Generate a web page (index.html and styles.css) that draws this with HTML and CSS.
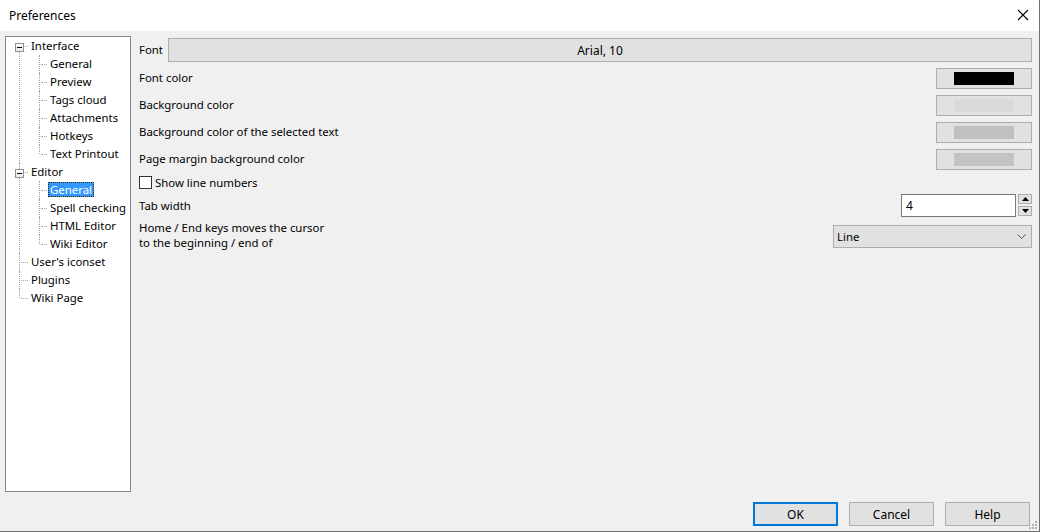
FILE: index.html
```html
<!DOCTYPE html>
<html lang="en">
  <head>
    <meta charset="UTF-8">
    <title>Preferences</title>
    <link rel="stylesheet" href="styles.css">
  </head>
  <body>
    <div class="window">
      <div class="titlebar">
        <span class="title">Preferences</span>
        <svg class="close" width="12" height="12" viewBox="0 0 12 12">
          <path d="M1 1 L11 11 M11 1 L1 11" stroke="#000" stroke-width="1.1" fill="none"/>
        </svg>
      </div>

      <div class="main">
        <div class="tree">
          <ul class="root">
            <li>
              <div class="row"><span class="toggle"></span><span class="label">Interface</span></div>
              <ul class="sub">
                <li><div class="row"><span class="label">General</span></div></li>
                <li><div class="row"><span class="label">Preview</span></div></li>
                <li><div class="row"><span class="label">Tags cloud</span></div></li>
                <li><div class="row"><span class="label">Attachments</span></div></li>
                <li><div class="row"><span class="label">Hotkeys</span></div></li>
                <li><div class="row"><span class="label">Text Printout</span></div></li>
              </ul>
            </li>
            <li>
              <div class="row"><span class="toggle"></span><span class="label">Editor</span></div>
              <ul class="sub">
                <li><div class="row"><span class="label selected">General</span></div></li>
                <li><div class="row"><span class="label">Spell checking</span></div></li>
                <li><div class="row"><span class="label">HTML Editor</span></div></li>
                <li><div class="row"><span class="label">Wiki Editor</span></div></li>
              </ul>
            </li>
            <li><div class="row"><span class="label">User's iconset</span></div></li>
            <li><div class="row"><span class="label">Plugins</span></div></li>
            <li><div class="row"><span class="label">Wiki Page</span></div></li>
          </ul>
        </div>

        <div class="panel">
          <div class="font-row">
            <span class="font-label">Font</span>
            <div class="btn font-btn">Arial, 10</div>
          </div>
          <div class="color-row">
            <span>Font color</span>
            <div class="btn color-btn"><span class="swatch sw-black"></span></div>
          </div>
          <div class="color-row">
            <span>Background color</span>
            <div class="btn color-btn"><span class="swatch sw-light"></span></div>
          </div>
          <div class="color-row">
            <span>Background color of the selected text</span>
            <div class="btn color-btn"><span class="swatch sw-mid"></span></div>
          </div>
          <div class="color-row">
            <span>Page margin background color</span>
            <div class="btn color-btn"><span class="swatch sw-mid2"></span></div>
          </div>
          <div class="check-row">
            <span class="checkbox"></span>
            <span>Show line numbers</span>
          </div>
          <div class="tab-row">
            <span>Tab width</span>
            <div class="spin">
              <div class="spin-input">4</div>
              <div class="spin-btns">
                <div class="spin-btn">
                  <svg width="7" height="4" viewBox="0 0 7 4"><path d="M0 4 L3.5 0 L7 4 Z" fill="#000"/></svg>
                </div>
                <div class="spin-btn">
                  <svg width="7" height="4" viewBox="0 0 7 4"><path d="M0 0 L3.5 4 L7 0 Z" fill="#000"/></svg>
                </div>
              </div>
            </div>
          </div>
          <div class="home-row">
            <span class="home-text">Home / End keys moves the cursor<br>to the beginning / end of</span>
            <div class="combo">
              <span>Line</span>
              <svg width="9" height="5" viewBox="0 0 9 5"><path d="M0.5 0.5 L4.5 4.5 L8.5 0.5" stroke="#555" fill="none"/></svg>
            </div>
          </div>
        </div>
      </div>

      <div class="footer">
        <div class="btn dlg-btn default">OK</div>
        <div class="btn dlg-btn">Cancel</div>
        <div class="btn dlg-btn">Help</div>
        <svg class="grip" width="8" height="8" viewBox="0 0 8 8">
          <rect x="6" y="0" width="2" height="2" fill="#b4b4b4"/>
          <rect x="3" y="3" width="2" height="2" fill="#b4b4b4"/>
          <rect x="6" y="3" width="2" height="2" fill="#b4b4b4"/>
          <rect x="0" y="6" width="2" height="2" fill="#b4b4b4"/>
          <rect x="3" y="6" width="2" height="2" fill="#b4b4b4"/>
          <rect x="6" y="6" width="2" height="2" fill="#b4b4b4"/>
        </svg>
      </div>
    </div>
  </body>
</html>
```

FILE: styles.css
```css
html, body {
  margin: 0;
  padding: 0;
}

body {
  font-family: "Noto Sans", "Liberation Sans", sans-serif;
  font-size: 11.4px;
  color: #000;
  background: #f0f0f0;
}

.window {
  width: 1040px;
  height: 532px;
  box-sizing: border-box;
  border-right: 1px solid #707070;
  border-bottom: 1px solid #707070;
  background: #f0f0f0;
  display: flex;
  flex-direction: column;
}

.titlebar {
  height: 31px;
  background: #fff;
  display: flex;
  align-items: center;
  justify-content: space-between;
  padding: 0 10px 0 9px;
  flex-shrink: 0;
}

.title {
  font-size: 12px;
}

.close {
  margin-top: -1px;
}

.main {
  display: flex;
  height: 461px;
}

/* tree on the left */
.tree {
  width: 126px;
  height: 456px;
  margin: 5px 0 0 5px;
  box-sizing: border-box;
  border: 1px solid #828790;
  background: #fff;
}

.tree ul {
  list-style: none;
  margin: 0;
  padding: 0;
}

.tree li {
  position: relative;
}

.tree .row {
  position: relative;
  height: 18px;
  box-sizing: border-box;
  padding-bottom: 2px;
  display: flex;
  align-items: center;
}

.root > li > .row {
  padding-left: 23px;
}

.sub > li > .row {
  padding-left: 42px;
}

.root > li::before {
  content: "";
  position: absolute;
  left: 13px;
  top: 0;
  bottom: 0;
  border-left: 1px dotted #a0a0a0;
}

.root > li:first-child::before {
  top: 9px;
}

.root > li:last-child::before {
  bottom: auto;
  height: 9px;
}

.root > li > .row::before {
  content: "";
  position: absolute;
  left: 15px;
  top: 9px;
  width: 7px;
  border-top: 1px dotted #a0a0a0;
}

.sub > li::before {
  content: "";
  position: absolute;
  left: 33px;
  top: 0;
  bottom: 0;
  border-left: 1px dotted #a0a0a0;
}

.sub > li:last-child::before {
  bottom: auto;
  height: 9px;
}

.sub > li > .row::before {
  content: "";
  position: absolute;
  left: 35px;
  top: 9px;
  width: 6px;
  border-top: 1px dotted #a0a0a0;
}

.toggle {
  position: absolute;
  left: 9px;
  top: 6px;
  width: 9px;
  height: 9px;
  box-sizing: border-box;
  border: 1px solid #919191;
  background: linear-gradient(#fff, #e8e8e8);
  z-index: 1;
}

.toggle::after {
  content: "";
  position: absolute;
  left: 1px;
  top: 3px;
  width: 5px;
  height: 1px;
  background: #000;
}

.label {
  padding: 0 2px;
  line-height: 15px;
  white-space: nowrap;
}

.label.selected {
  background: #3399ff;
  color: #fff;
  outline: 1px dotted #3a2a00;
  outline-offset: -1px;
}

/* right panel */
.panel {
  flex: 1;
  margin: 7px 7px 0 8px;
  display: flex;
  flex-direction: column;
}

.btn {
  background: #e1e1e1;
  border: 1px solid #adadad;
  box-sizing: border-box;
  display: flex;
  align-items: center;
  justify-content: center;
}

.font-row {
  display: flex;
  align-items: center;
  height: 24px;
}

.font-label {
  width: 29px;
  margin-top: -1px;
}

.font-btn {
  flex: 1;
  height: 24px;
  font-size: 12px;
}

.color-row {
  display: flex;
  align-items: center;
  justify-content: space-between;
  height: 21px;
  margin-top: 6px;
}

.color-row > span:first-child {
  margin-top: -2px;
}

.color-btn {
  width: 96px;
  height: 21px;
}

.swatch {
  width: 60px;
  height: 13px;
}

.sw-black { background: #000; }
.sw-light { background: #d9d9d9; }
.sw-mid { background: #c0c0c0; }
.sw-mid2 { background: #c3c3c3; }

.check-row {
  display: flex;
  align-items: center;
  height: 14px;
  margin-top: 5px;
}

.checkbox {
  width: 13px;
  height: 13px;
  box-sizing: border-box;
  border: 1px solid #333;
  background: #fff;
  margin-right: 3px;
}

.tab-row {
  display: flex;
  align-items: center;
  justify-content: space-between;
  height: 22px;
  margin-top: 5px;
}

.spin {
  display: flex;
  align-items: center;
}

.spin-input {
  width: 115px;
  height: 23px;
  box-sizing: border-box;
  border: 1px solid #7a7a7a;
  background: #fff;
  padding-left: 4px;
  line-height: 21px;
  font-size: 12px;
}

.spin-btns {
  margin-left: 2px;
  display: flex;
  flex-direction: column;
  gap: 2px;
}

.spin-btn {
  width: 14px;
  height: 10px;
  box-sizing: border-box;
  border: 1px solid #adadad;
  background: #e1e1e1;
  display: flex;
  align-items: center;
  justify-content: center;
}

.home-row {
  display: flex;
  align-items: center;
  justify-content: space-between;
  height: 30px;
  margin-top: 5px;
}

.home-text {
  line-height: 15px;
  margin-top: -2px;
}

.combo {
  width: 199px;
  height: 23px;
  box-sizing: border-box;
  border: 1px solid #adadad;
  background: #e1e1e1;
  display: flex;
  align-items: center;
  justify-content: space-between;
  padding: 0 5px 0 3px;
}

/* bottom buttons */
.footer {
  display: flex;
  justify-content: flex-end;
  align-items: flex-start;
  gap: 11px;
  padding: 10px 9px 0 0;
  position: relative;
  flex: 1;
  font-size: 12px;
}

.dlg-btn {
  width: 85px;
  height: 24px;
}

.dlg-btn.default {
  border: 2px solid #0078d7;
}

.grip {
  position: absolute;
  right: 2px;
  bottom: 2px;
}
```
